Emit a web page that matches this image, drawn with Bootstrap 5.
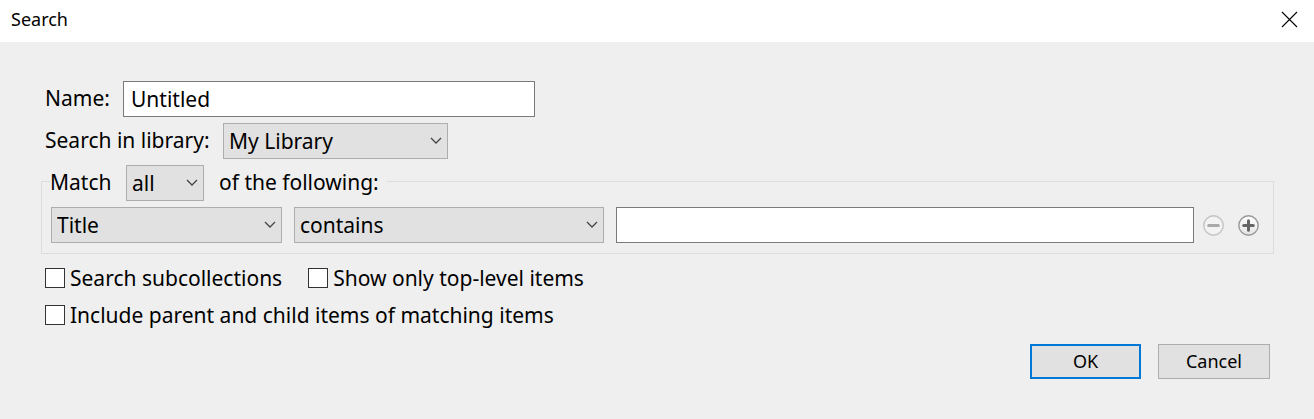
<!DOCTYPE html>
<html lang="en">
<head>
<meta charset="utf-8">
<meta name="viewport" content="width=device-width, initial-scale=1">
<title>Search</title>
<link href="https://cdn.jsdelivr.net/npm/bootstrap@5.3.0/dist/css/bootstrap.min.css" rel="stylesheet">
<style>
  body { background: #efefef; color: #000; font-family: "Noto Sans", "Open Sans", sans-serif; font-size: 21px; line-height: 28px; }
  .titlebar { height: 42px; padding: 0 16px 4px 11px; font-size: 18px; }
  .dialog-body { padding: 39px 40px 0 41px; }
  .stack { gap: 6px; }
  .inset { padding-left: 4px; }
  .row-label { padding-bottom: 2px; }
  .lbl-name { width: 78px; }
  .lbl-library { width: 178px; }
  .lbl-match { width: 76px; }
  .form-control, .form-select { height: 36px; border-radius: 0; font-size: 21px; line-height: 28px; color: #000; }
  .form-control { border-color: #7a7a7a; padding: 3px 7px; }
  .form-select { border-color: #adadad; padding: 3px 24px 3px 5px; background-color: #e1e1e1; background-position: right 5px center; background-size: 12px 8px;
    background-image: url("data:image/svg+xml,%3Csvg xmlns='http://www.w3.org/2000/svg' viewBox='0 0 12 8'%3E%3Cpath d='M1 1l5 5 5-5' fill='none' stroke='%23444' stroke-width='1.3'/%3E%3C/svg%3E"); }
  .name-box { width: 412px; }
  .library-select { width: 225px; }
  .mode-select { width: 78px; }
  .field-select { width: 231px; }
  .operator-select { width: 310px; }
  .conditions { border: 1px solid #dcdcdc; padding: 9px 14px 10px 8px; }
  .conditions legend { height: 33px; font-size: 21px; line-height: 34px; padding-right: 8px; }
  .following { margin-left: 15px; }
  .condition { gap: 12px; padding-left: 1px; }
  .condition-buttons { gap: 14px; margin-left: -3px; }
  .round-btn { width: 21px; height: 21px; }
  .checks { padding-top: 10px; gap: 9px; }
  .checks-line { gap: 26px; }
  .form-check-input[type=checkbox] { width: 20px; height: 20px; border: 1px solid #333; border-radius: 0; }
  .form-check-label { margin-left: 5px; }
  .actions { gap: 17px; padding: 15px 4px 0 0; }
  .actions .btn { width: 112px; height: 35px; padding: 0 0 2px; border-radius: 0; background: #e1e1e1; border: 1px solid #adadad; color: #000; font-size: 18px; line-height: 28px; }
  .actions .btn-default { width: 111px; border: 2px solid #0078d7; }
</style>
</head>
<body>
<header class="titlebar bg-white d-flex align-items-center justify-content-between">
  <span>Search</span>
  <button type="button" class="btn p-0 border-0 d-flex" aria-label="Close">
    <svg width="17" height="17" viewBox="0 0 17 17" fill="none" stroke="#000" stroke-width="1.1"><path d="M1 1l15 15M16 1L1 16"/></svg>
  </button>
</header>
<main class="dialog-body">
  <form>
    <div class="stack d-flex flex-column">
      <div class="inset d-flex align-items-center">
        <label class="row-label lbl-name" for="name">Name:</label>
        <input class="form-control name-box" id="name" type="text" value="Untitled">
      </div>
      <div class="inset d-flex align-items-center">
        <label class="row-label lbl-library" for="library">Search in library:</label>
        <select class="form-select library-select" id="library"><option>My Library</option></select>
      </div>
      <fieldset class="conditions">
        <legend class="float-none w-auto m-0 d-flex align-items-start">
          <label class="lbl-match" for="mode">Match</label>
          <select class="form-select mode-select" id="mode"><option>all</option><option>any</option></select>
          <span class="following">of the following:</span>
        </legend>
        <div class="condition d-flex align-items-center">
          <select class="form-select field-select flex-shrink-0" aria-label="Field"><option>Title</option></select>
          <select class="form-select operator-select flex-shrink-0" aria-label="Operator"><option>contains</option></select>
          <input class="form-control flex-fill" type="text" aria-label="Value">
          <div class="condition-buttons d-flex">
            <button type="button" class="btn round-btn p-0 border-0 d-flex opacity-50" disabled aria-label="Remove condition">
              <svg width="21" height="21" viewBox="0 0 21 21"><circle cx="10.500" cy="10.500" r="9.700" fill="#f8f8f8" stroke="#999" stroke-width="1.400"/><path d="M5.700 10.500h9.600" stroke="#666" stroke-width="3" stroke-linecap="round"/></svg>
            </button>
            <button type="button" class="btn round-btn p-0 border-0 d-flex" aria-label="Add condition">
              <svg width="21" height="21" viewBox="0 0 21 21"><defs><linearGradient id="face" x2="0" y2="1"><stop stop-color="#fff"/><stop offset="1" stop-color="#e4e4e4"/></linearGradient></defs><circle cx="10.500" cy="10.500" r="9.700" fill="url(#face)" stroke="#999" stroke-width="1.400"/><path d="M5.700 10.500h9.600M10.500 5.700v9.600" stroke="#666" stroke-width="3" stroke-linecap="round"/></svg>
            </button>
          </div>
        </div>
      </fieldset>
    </div>
    <div class="checks inset d-flex flex-column">
      <div class="checks-line d-flex">
        <div class="d-flex align-items-center"><input class="form-check-input m-0" type="checkbox" id="sub"><label class="form-check-label" for="sub">Search subcollections</label></div>
        <div class="d-flex align-items-center"><input class="form-check-input m-0" type="checkbox" id="top"><label class="form-check-label" for="top">Show only top-level items</label></div>
      </div>
      <div class="d-flex align-items-center"><input class="form-check-input m-0" type="checkbox" id="inc"><label class="form-check-label" for="inc">Include parent and child items of matching items</label></div>
    </div>
    <div class="actions d-flex justify-content-end">
      <button type="submit" class="btn btn-default">OK</button>
      <button type="button" class="btn">Cancel</button>
    </div>
  </form>
</main>
<script src="https://cdn.jsdelivr.net/npm/bootstrap@5.3.0/dist/js/bootstrap.bundle.min.js"></script>
</body>
</html>
